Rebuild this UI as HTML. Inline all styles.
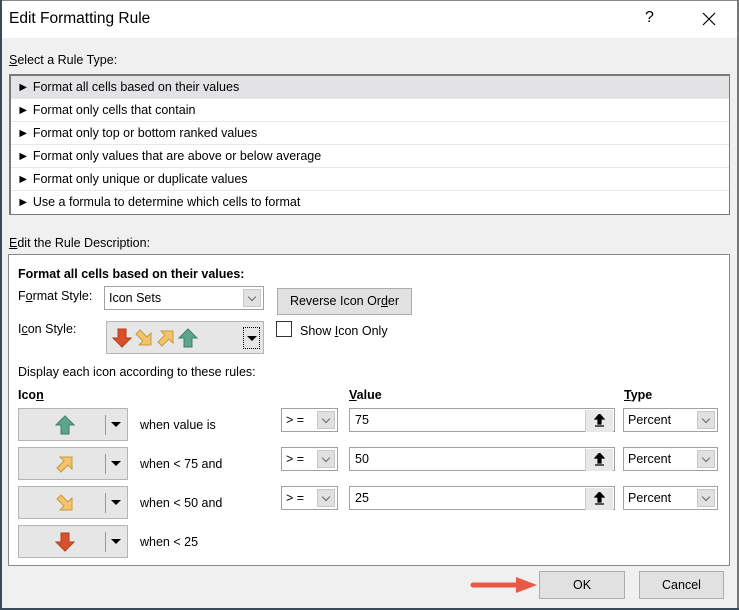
<!DOCTYPE html>
<html><head><style>
*{box-sizing:border-box;margin:0;padding:0}
body{width:739px;height:610px;overflow:hidden;font-family:"Liberation Sans",sans-serif;font-size:12.5px;color:#000;background:#fff}
.win{position:absolute;left:0;top:0;width:739px;height:610px;background:#f0f0f0}
.a{position:absolute;white-space:nowrap}
.title{position:absolute;left:0;top:0;width:739px;height:38px;background:#fff}
.list{position:absolute;left:9px;top:74px;width:721px;height:141px;background:#fff;border:1px solid #7a7a7a;border-width:2px 1px 1px 2px}
.row{height:23px;line-height:22px;padding-left:6px;border-bottom:1px solid #e8e8e8}
.row.sel{background:#e3e3e6}
.desc{position:absolute;left:8px;top:254px;width:722px;height:312px;background:#fff;border:1px solid #8a8a8a}
.combo{position:absolute;background:#fff;border:1px solid #a0a0a0;height:24px;line-height:22px;padding-left:4px}
.dd{position:absolute;right:2px;top:2px;width:18px;height:18px;background:#e1e1e1;border:1px solid #c8c8c8}
.dd::after{content:"";position:absolute;left:5px;top:4px;width:5px;height:5px;border-right:1px solid #666;border-bottom:1px solid #666;transform:rotate(45deg)}
.btn{position:absolute;background:#e1e1e1;border:1px solid #adadad;text-align:center}
.ib{position:absolute;left:18px;width:110px;height:33px;background:#e6e6e6;border:1px solid #b5b5b5}
.ib .sep{position:absolute;left:86px;top:6px;width:1px;height:20px;background:#999}
.tri{position:absolute;width:0;height:0;border-left:5px solid transparent;border-right:5px solid transparent;border-top:5px solid #000}
.ib .tri{left:92px;top:13px}
.ib svg{position:absolute;left:36px;top:6px}
.up{position:absolute;right:1px;top:1px;width:28px;height:22px;background:#e8e8e8;border-left:1px solid #ccc}
.up svg{position:absolute;left:8px;top:4px}
u{text-decoration:underline}
</style></head><body>
<div class="win">
<div class="title"></div>
<div class="a" style="left:9px;top:10px;font-size:15.5px">Edit Formatting Rule</div>
<div class="a" style="left:645px;top:9px;font-size:16px">?</div>
<svg class="a" style="left:702px;top:12px" width="14" height="14"><path d="M1 1L13 13M13 1L1 13" stroke="#000" stroke-width="1.2"/></svg>
<div class="a" style="left:9px;top:53px"><u>S</u>elect a Rule Type:</div>
<div class="list">
<div class="row sel">► Format all cells based on their values</div>
<div class="row">► Format only cells that contain</div>
<div class="row">► Format only top or bottom ranked values</div>
<div class="row">► Format only values that are above or below average</div>
<div class="row">► Format only unique or duplicate values</div>
<div class="row" style="border:none">► Use a formula to determine which cells to format</div>
</div>
<div class="a" style="left:9px;top:236px"><u>E</u>dit the Rule Description:</div>
<div class="desc"></div>
<div class="a" style="left:18px;top:267px;font-weight:bold">Format all cells based on their values:</div>
<div class="a" style="left:18px;top:289px">F<u>o</u>rmat Style:</div>
<div class="combo" style="left:104px;top:286px;width:160px">Icon Sets<div class="dd"></div></div>
<div class="btn" style="left:277px;top:288px;width:135px;height:27px;line-height:25px">Reverse Icon Or<u>d</u>er</div>
<div class="a" style="left:18px;top:322px">I<u>c</u>on Style:</div>
<div class="a" style="left:106px;top:321px;width:158px;height:33px;background:#e6e6e6;border:1px solid #b5b5b5">
<svg style="position:absolute;left:4px;top:5px" width="90" height="22" viewBox="0 0 90 22">
<g stroke-width="1"><path transform="translate(1,1)" d="M6 1H14V10H19L10 19L1 10H6Z" fill="#d9512c" stroke="#b0401f"/>
<path transform="translate(23,1)" d="M5 17H17V5L13 9L6 2L2 6L9 13Z" fill="#f2c46c" stroke="#c9993d"/>
<path transform="translate(45,1)" d="M5 3H17V15L13 11L6 18L2 14L9 7Z" fill="#f2c46c" stroke="#c9993d"/>
<path transform="translate(67,1)" d="M10 1L19 10L14 10L14 19L6 19L6 10L1 10Z" fill="#5fa48e" stroke="#3f7d69"/></g></svg>
<div style="position:absolute;left:136px;top:5px;width:17px;height:22px;border:1px dotted #000"><div class="tri" style="left:3px;top:8px"></div></div>
</div>
<div class="a" style="left:276px;top:321px;width:16px;height:16px;border:1px solid #333;background:#fff"></div>
<div class="a" style="left:300px;top:324px">Show <u>I</u>con Only</div>
<div class="a" style="left:18px;top:365px">Display each icon according to these rules:</div>
<div class="a" style="left:18px;top:388px;font-weight:bold">Ico<u>n</u></div>
<div class="a" style="left:349px;top:388px;font-weight:bold"><u>V</u>alue</div>
<div class="a" style="left:624px;top:388px;font-weight:bold"><u>T</u>ype</div>

<div class="ib" style="top:408px"><svg width="20" height="20" viewBox="0 0 20 20"><path d="M10 1L19 10L14 10L14 19L6 19L6 10L1 10Z" fill="#5fa48e" stroke="#3f7d69"/></svg><div class="sep"></div><div class="tri"></div></div>
<div class="ib" style="top:447px"><svg width="20" height="20" viewBox="0 0 20 20"><path d="M5 3H17V15L13 11L6 18L2 14L9 7Z" fill="#f2c46c" stroke="#c9993d"/></svg><div class="sep"></div><div class="tri"></div></div>
<div class="ib" style="top:486px"><svg width="20" height="20" viewBox="0 0 20 20"><path d="M5 17H17V5L13 9L6 2L2 6L9 13Z" fill="#f2c46c" stroke="#c9993d"/></svg><div class="sep"></div><div class="tri"></div></div>
<div class="ib" style="top:525px"><svg width="20" height="20" viewBox="0 0 20 20"><path d="M6 1H14V10H19L10 19L1 10H6Z" fill="#d9512c" stroke="#b0401f"/></svg><div class="sep"></div><div class="tri"></div></div>
<div class="a" style="left:140px;top:418px">when value is</div>
<div class="a" style="left:140px;top:457px">when &lt; 75 and</div>
<div class="a" style="left:140px;top:496px">when &lt; 50 and</div>
<div class="a" style="left:140px;top:535px">when &lt; 25</div>

<div class="combo" style="left:281px;top:408px;width:57px">&gt; =<div class="dd"></div></div>
<div class="combo" style="left:281px;top:447px;width:57px">&gt; =<div class="dd"></div></div>
<div class="combo" style="left:281px;top:486px;width:57px">&gt; =<div class="dd"></div></div>
<div class="combo" style="left:349px;top:408px;width:266px;padding-left:5px">75<div class="up"><svg width="11" height="13"><path d="M5.5 0L10 5H7V10H4V5H1Z M1 12H10" fill="#000" stroke="#000" stroke-width="1.2"/></svg></div></div>
<div class="combo" style="left:349px;top:447px;width:266px;padding-left:5px">50<div class="up"><svg width="11" height="13"><path d="M5.5 0L10 5H7V10H4V5H1Z M1 12H10" fill="#000" stroke="#000" stroke-width="1.2"/></svg></div></div>
<div class="combo" style="left:349px;top:486px;width:266px;padding-left:5px">25<div class="up"><svg width="11" height="13"><path d="M5.5 0L10 5H7V10H4V5H1Z M1 12H10" fill="#000" stroke="#000" stroke-width="1.2"/></svg></div></div>
<div class="combo" style="left:623px;top:408px;width:95px">Percent<div class="dd"></div></div>
<div class="combo" style="left:623px;top:447px;width:95px">Percent<div class="dd"></div></div>
<div class="combo" style="left:623px;top:486px;width:95px">Percent<div class="dd"></div></div>

<svg class="a" style="left:470px;top:575px" width="70" height="20"><path d="M3 10H52" stroke="#e8594a" stroke-width="5" stroke-linecap="round"/><path d="M46 2L67 10L46 18Z" fill="#e8594a"/></svg>
<div class="btn" style="left:539px;top:571px;width:86px;height:28px;line-height:26px">OK</div>
<div class="btn" style="left:639px;top:571px;width:85px;height:28px;line-height:26px">Cancel</div>
</div>
<div class="a" style="left:0;top:0;width:739px;height:1px;background:#888"></div>
<div class="a" style="right:0;top:0;width:2px;height:610px;background:#777"></div>
<div class="a" style="left:0;top:0;width:2px;height:610px;background:#3a4a5a"></div>
<div class="a" style="left:0;bottom:0;width:739px;height:2px;background:#3a4a5a"></div>
</body></html>
